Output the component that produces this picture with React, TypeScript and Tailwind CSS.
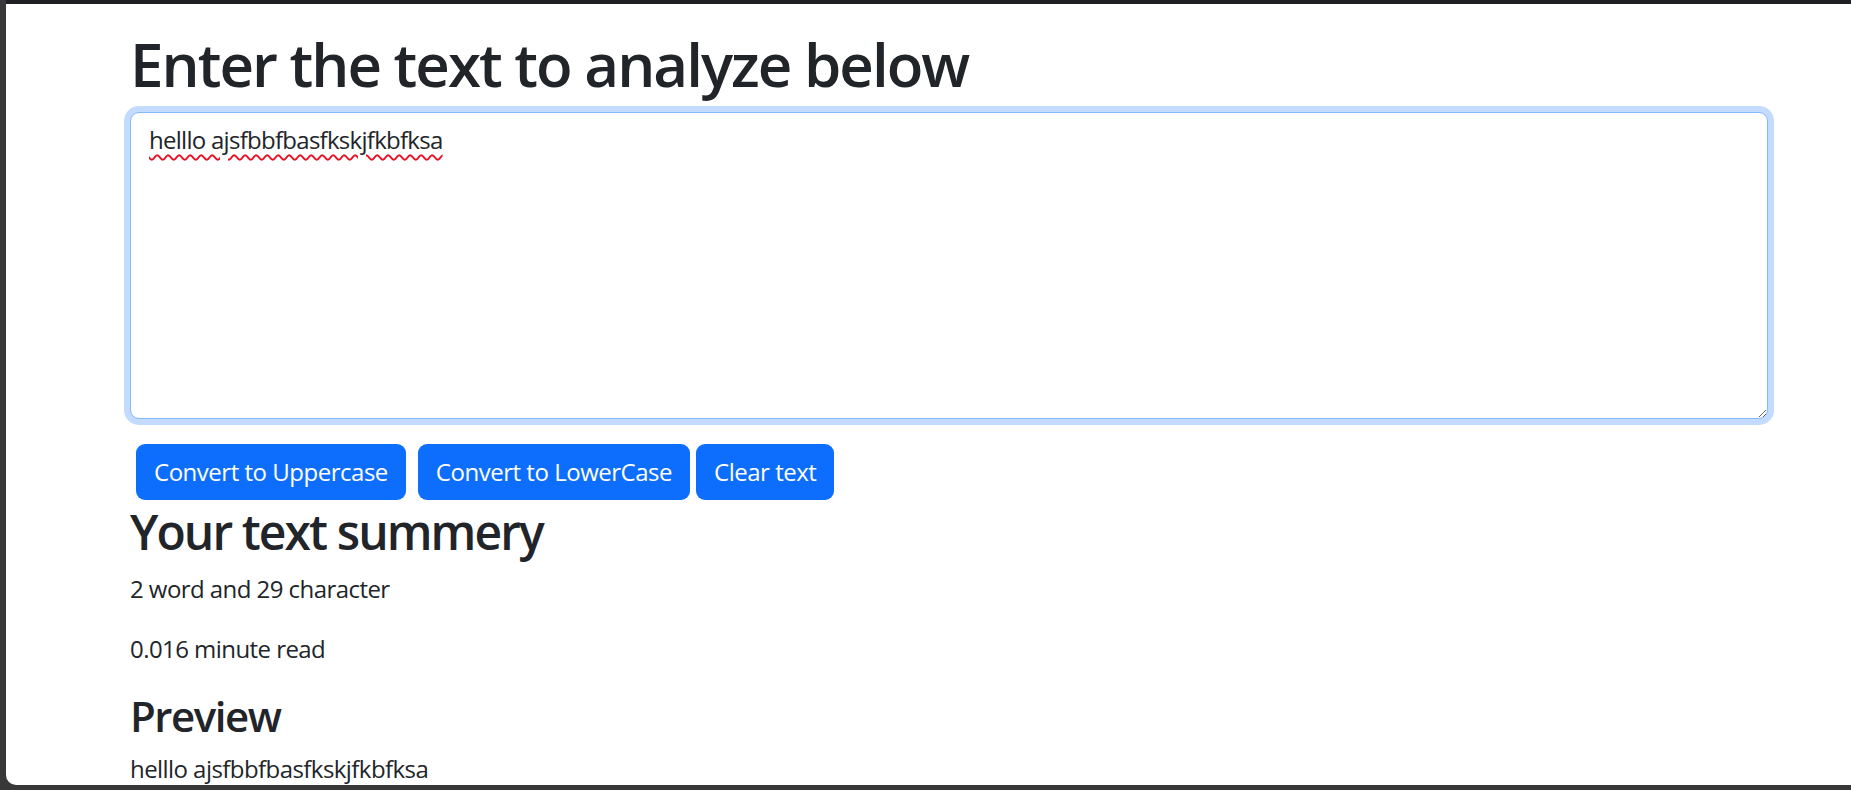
import { useState } from 'react';

export default function App() {
    const [text, setText] = useState('helllo ajsfbbfbasfkskjfkbfksa');

    const words = text.split(/\s+/).filter((w) => w.length > 0).length;
    const minutes = Math.round(0.008 * words * 1000) / 1000;

    return (
        <div className="h-screen w-full flex flex-col bg-[#383838] pl-[6px] pb-[5px] overflow-hidden font-['Open_Sans',sans-serif] text-[#212529] tracking-[-0.035em]">
            <div className="h-[4px] bg-[#1f2023] shrink-0" />
            <div className="flex-1 bg-white rounded-bl-[10px] overflow-hidden">
                <div className="w-[1638px] ml-[124px] pt-[24px]">
                    <h1 className="text-[60px] leading-[1.2] font-semibold tracking-[-0.033em] mb-[12px]">Enter the text to analyze below</h1>
                    <div className="mb-[25px]">
                        <textarea
                            value={text}
                            onChange={(e) => setText(e.target.value)}
                            spellCheck={false}
                            className="block w-full h-[307px] px-[18px] py-[9px] text-[24px] leading-[36px] tracking-[-0.03em] text-[#212529] bg-white border-[1.5px] border-[#86b7fe] rounded-[9px] shadow-[0_0_0_6px_rgba(13,110,253,0.25)] outline-none underline decoration-wavy decoration-[#e81123] decoration-[1.5px] underline-offset-[5px]"
                        />
                    </div>
                    {/* Buttons */}
                    <div className="flex h-[56px] tracking-[-0.03em]">
                        <button
                            onClick={() => setText(text.toUpperCase())}
                            className="ml-[6px] px-[18px] h-full rounded-[9px] bg-[#0d6efd] text-white text-[24px]"
                        >
                            Convert to Uppercase
                        </button>
                        <button
                            onClick={() => setText(text.toLowerCase())}
                            className="ml-[12px] px-[18px] h-full rounded-[9px] bg-[#0d6efd] text-white text-[24px]"
                        >
                            Convert to LowerCase
                        </button>
                        <button
                            onClick={() => setText('')}
                            className="ml-[6px] px-[18px] h-full rounded-[9px] bg-[#0d6efd] text-white text-[24px]"
                        >
                            Clear text
                        </button>
                    </div>
                    <h2 className="text-[48px] leading-[1.2] font-semibold tracking-[-0.04em] mt-[3px] mb-[10px]">Your text summery</h2>
                    <p className="text-[24px] leading-[36px] mb-[24px]">
                        {words} word and {text.length} character
                    </p>
                    <p className="text-[24px] leading-[36px] mb-[24px]">{minutes} minute read</p>
                    <h3 className="text-[42px] leading-[1.2] font-semibold tracking-[-0.035em] mt-[2px] mb-[10px]">Preview</h3>
                    <p className="text-[24px] leading-[36px]">{text}</p>
                </div>
            </div>
        </div>
    );
}
